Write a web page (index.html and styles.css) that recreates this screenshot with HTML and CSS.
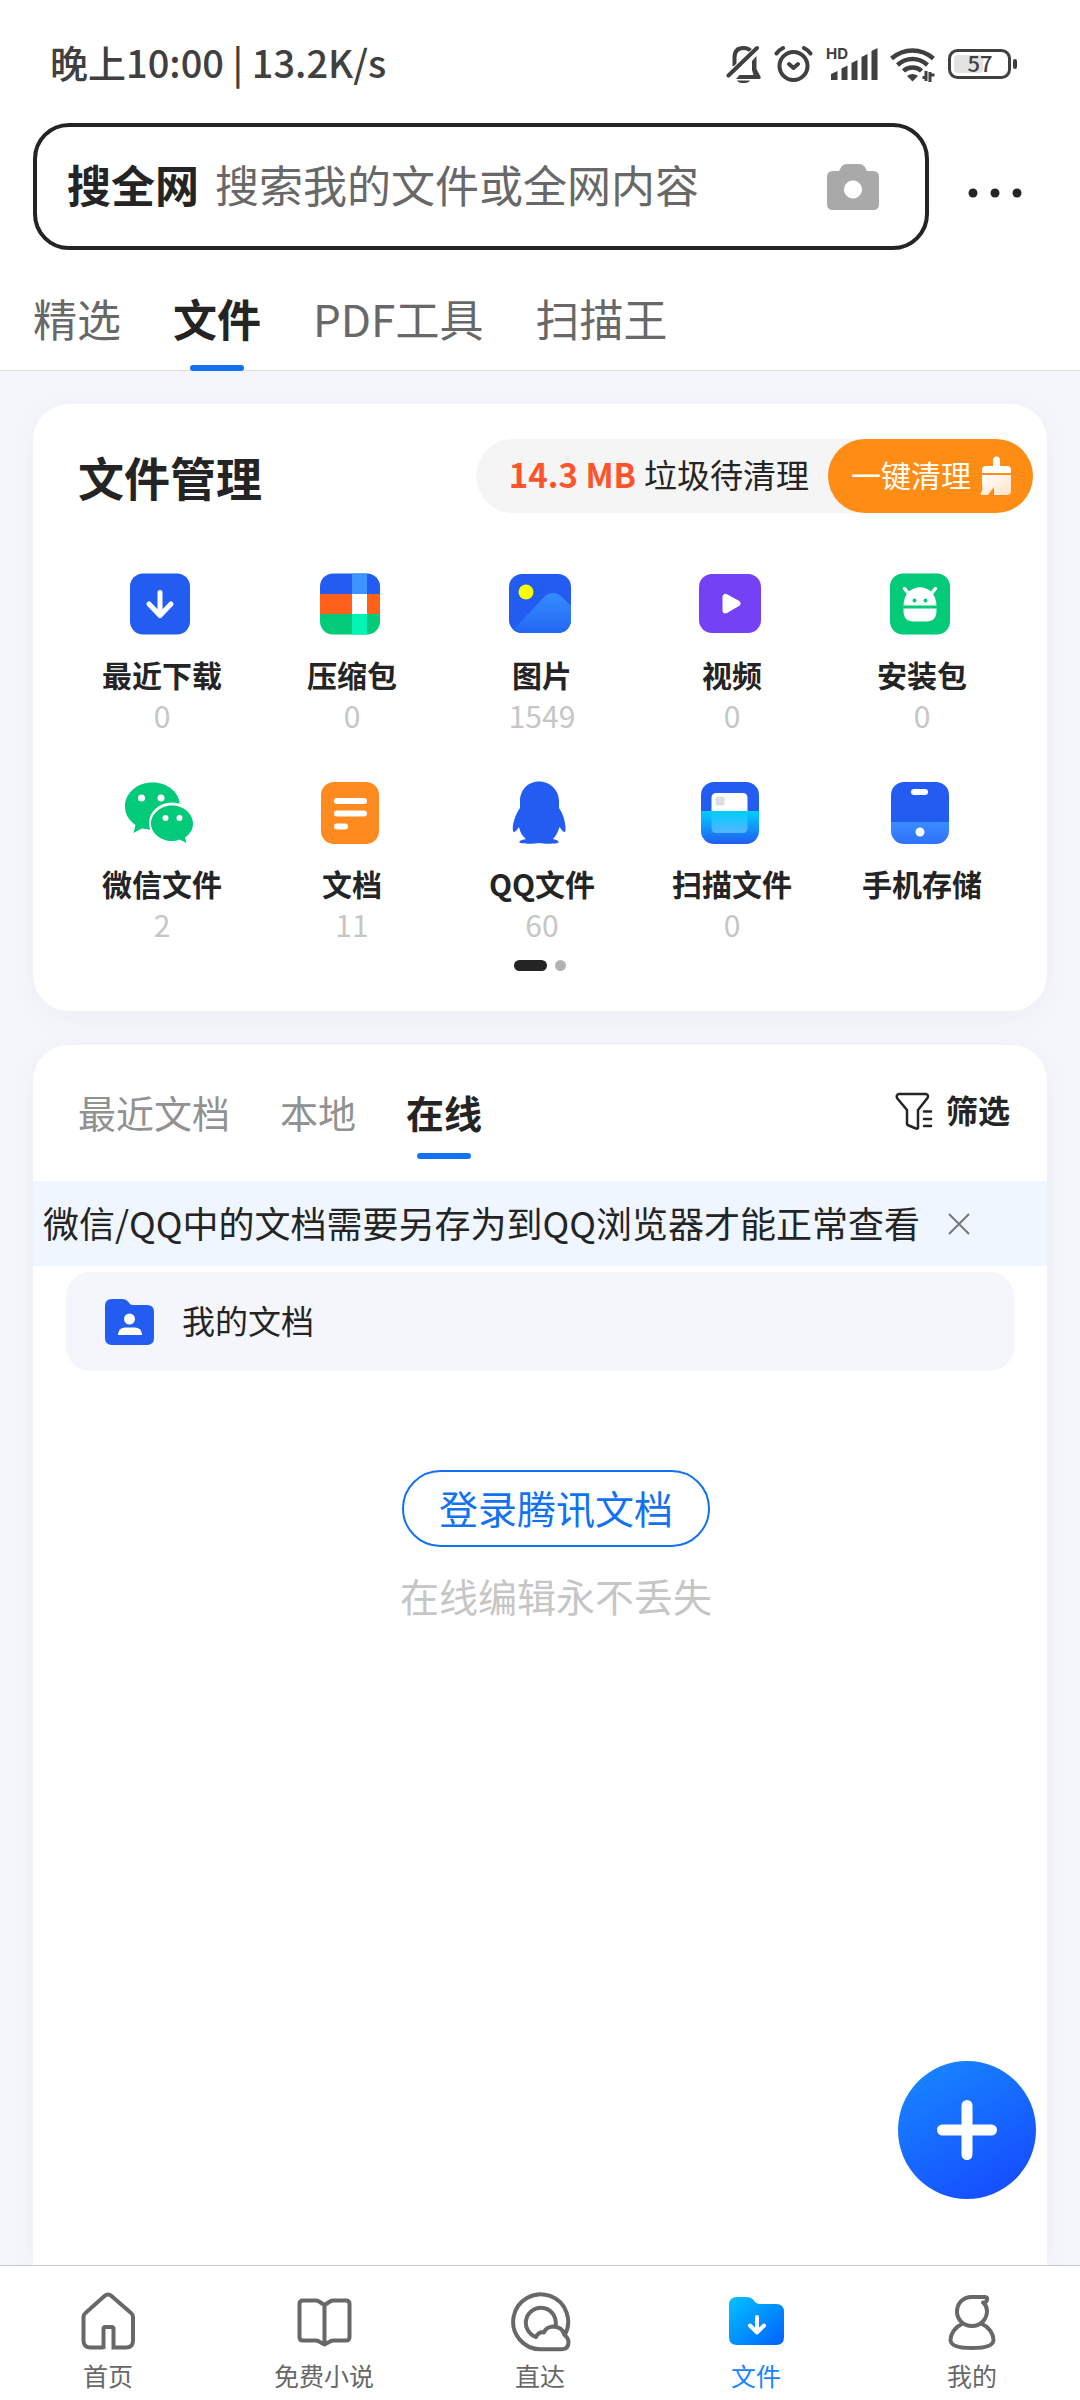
FILE: index.html
```html
<!DOCTYPE html>
<html lang="zh-CN">
<head>
<meta charset="utf-8">
<meta name="viewport" content="width=device-width, initial-scale=1">
<title>文件</title>
<link rel="stylesheet" href="styles.css">
</head>
<body>
<header class="header">
  <div class="status">
    <span class="status-text">晚上10:00 | 13.2K/s</span>
    <div class="status-icons">
      <svg width="36" height="38" viewBox="0 0 36 38" fill="none" stroke="#404040" stroke-width="4" stroke-linecap="round">
        <path d="M8.500 21V12.500C8.500 6 12 3 17.500 3c4 0 6.500 1.500 8 4" stroke-linecap="butt"/>
        <path d="M26 16l4.500-5v13l4 7.500c.5 1.500 0 2.500-1 2.500H10l3.500-4h14l-1.500-5z" fill="#404040" stroke="none"/>
        <path d="M2 31.500L32 3" stroke="#fff" stroke-width="7"/>
        <path d="M2.500 30.500L31 3"/>
        <path d="M11 35.500h13c-2 3.500-11 3.500-13 0z" fill="#404040" stroke="none"/>
      </svg>
      <svg width="40" height="38" viewBox="0 0 40 38" fill="none" stroke="#404040" stroke-width="4" stroke-linecap="round" stroke-linejoin="round">
        <circle cx="19.500" cy="21" r="14"/>
        <path d="M15 19l4.500 4 4.500-4M2.500 8.500Q5 5 9 3M30 3q4 2 6.500 5.500"/>
      </svg>
      <svg width="52" height="38" viewBox="-2 0 52 38" fill="#404040">
        <text x="-2" y="14" class="hd">HD</text>
        <path d="M3 29l6.500-3v9H3zM13.500 23.500l6-3V35h-6zM23.500 18l6-3v20h-6zM33.500 12l6-3v26h-6zM43.500 6l6-3v32h-6z"/>
      </svg>
      <svg width="46" height="38" viewBox="0 0 46 38" fill="none" stroke="#404040" stroke-width="4.500">
        <path d="M1.500 13.500Q11 5.500 22.500 5.500T43.500 13.500M7.500 20Q14 14 22.500 14T37.500 20M13.500 26Q17 22.500 22.500 22.500T31.500 26"/>
        <path d="M17 31q5.500-4 11 0l-5.500 5.500z" fill="#404040" stroke="none"/>
        <path d="M36 26v10M34.500 32.500l-2 0M40 37V27M41.500 30h3" stroke-width="3"/>
      </svg>
      <svg width="70" height="38" viewBox="0 0 70 38" fill="none">
        <rect x="1.500" y="5.500" width="60" height="27" rx="8" stroke="#404040" stroke-width="3"/>
        <rect x="6" y="10" width="29" height="18" rx="4" fill="#e3e3e3"/>
        <rect x="65" y="14" width="4" height="10" rx="2" fill="#404040"/>
        <text x="32" y="27" text-anchor="middle" class="battery">57</text>
      </svg>
    </div>
  </div>
  <div class="search-row">
    <form class="search">
      <button type="button" class="search-scope">搜全网</button>
      <input class="search-input" type="text" aria-label="搜索" placeholder="搜索我的文件或全网内容">
      <button type="button" class="icon-button" aria-label="拍照搜索">
        <svg width="52" height="48" viewBox="0 0 52 48"><path fill="#a9a9a9" fill-rule="evenodd" d="M12 8l2.500-4.500Q16.500 1 19 1H33q3 0 4.500 2.500L40 8h6q6 0 6 6V41q0 6-6 6H6q-6 0-6-6V14Q0 8 6 8zM26 17.500a9 9 0 1 0 .01 0z"/></svg>
      </button>
    </form>
    <button type="button" class="icon-button more" aria-label="更多">
      <svg width="54" height="10" viewBox="0 0 54 10" fill="#242424"><circle cx="5" cy="5" r="4.500"/><circle cx="27" cy="5" r="4.500"/><circle cx="49" cy="5" r="4.500"/></svg>
    </button>
  </div>
  <nav class="tabs">
    <a href="#" class="tab">精选</a>
    <a href="#" class="tab active">文件</a>
    <a href="#" class="tab">PDF工具</a>
    <a href="#" class="tab">扫描王</a>
  </nav>
</header>

<main class="content">
  <section class="card manager">
    <div class="manager-head">
      <h1 class="title">文件管理</h1>
      <div class="clean">
        <span class="clean-info"><strong class="size">14.3 MB</strong>垃圾待清理</span>
        <button type="button" class="clean-button"><span class="clean-label">一键清理</span>
          <svg width="32" height="40" viewBox="0 0 32 40">
            <defs><linearGradient id="brush" x1="0" y1="0" x2="1" y2="1"><stop offset="0" stop-color="#fff"/><stop offset="1" stop-color="#ffe3c8"/></linearGradient></defs>
            <path fill="#fff" d="M13 10V4a3.500 3.500 0 0 1 7 0v6h7q4 0 4 4v3H2v-3q0-4 4-4z"/>
            <path fill="url(#brush)" d="M2 19H31V35q0 4-4 4H14V31l-6 8H1q-1-1 0-2 2-3 1-9z"/>
          </svg>
        </button>
      </div>
    </div>
    <ul class="grid">
      <li><a href="#" class="item">
        <svg width="72" height="64" viewBox="0 0 72 64"><rect x="6" y="1.500" width="60" height="61" rx="13" fill="#225cf0"/><path d="M36 20.500v23M25 32l11 11.500 11-11.500" fill="none" stroke="#fff" stroke-width="5" stroke-linecap="round" stroke-linejoin="round"/></svg>
        <span class="label">最近下载</span><span class="count">0</span></a></li>
      <li><a href="#" class="item">
        <svg width="72" height="64" viewBox="0 0 72 64"><defs><clipPath id="zip"><rect x="6" y="1.500" width="60" height="61" rx="13"/></clipPath></defs>
          <g clip-path="url(#zip)"><path fill="#225cf0" d="M6 0h60v22H6z"/><path fill="#ff611b" d="M6 22h60v20H6z"/><path fill="#03ca78" d="M6 42h60v22H6z"/><path fill="#3d93ff" d="M38 0h15v22H38z"/><path fill="#fff" d="M38 22h15v20H38z"/><path fill="#03f5b6" d="M38 42h15v22H38z"/></g></svg>
        <span class="label">压缩包</span><span class="count">0</span></a></li>
      <li><a href="#" class="item">
        <svg width="72" height="64" viewBox="0 0 72 64"><defs><clipPath id="pic"><rect x="5" y="2" width="62" height="59" rx="13"/></clipPath><linearGradient id="hill" x1="0" y1="0" x2="0" y2="1"><stop offset="0" stop-color="#358cff"/><stop offset="1" stop-color="#2467f3"/></linearGradient></defs>
          <g clip-path="url(#pic)"><path fill="#225cf0" d="M5 2h62v59H5z"/><circle cx="22" cy="20" r="7.500" fill="#fbff00"/><path fill="url(#hill)" d="M9 58L40 25q9-8 18 0l9 9v27H9z"/></g></svg>
        <span class="label">图片</span><span class="count">1549</span></a></li>
      <li><a href="#" class="item">
        <svg width="72" height="64" viewBox="0 0 72 64"><rect x="5" y="2" width="62" height="59" rx="13" fill="#7541f5"/><path d="M31.500 25v13.500l12-7z" fill="#fff" stroke="#fff" stroke-width="6" stroke-linejoin="round"/></svg>
        <span class="label">视频</span><span class="count">0</span></a></li>
      <li><a href="#" class="item">
        <svg width="72" height="64" viewBox="0 0 72 64"><rect x="6" y="1.500" width="60" height="61" rx="13" fill="#03ca78"/><path d="M19.500 33.500C20 9 52 9 52.500 33.500zM19.500 36.500h33v2q0 11-10 11h-13q-10 0-10-11z" fill="#fff"/><path d="M20.500 16.500l4 5M51.500 16.500l-4 5" stroke="#fff" stroke-width="3.500" stroke-linecap="round"/><circle cx="30.500" cy="28.500" r="2" fill="#03ca78"/><circle cx="41.500" cy="28.500" r="2" fill="#03ca78"/></svg>
        <span class="label">安装包</span><span class="count">0</span></a></li>
      <li><a href="#" class="item">
        <svg width="72" height="64" viewBox="0 0 72 64"><path fill="#03ca78" d="M28.500 1.500C13 1.500 1 12 1 25.500c0 8 4 14 10.500 18.500L9.500 52l8.500-4.500q7 1.500 11.500 1C43 49 56 38 56 25 56 12 44 1.500 28.500 1.500z"/><ellipse cx="48" cy="42" rx="23" ry="20.500" fill="#fff"/><path fill="#03ca78" d="M48 24.500c11.500 0 21 8 21 18 0 6-3 10.500-8 14l1.500 5.500-7-3.500q-3 1.500-7.500 1.500c-11.500 0-21-8-21-17.500s9.500-18 21-18z"/><g fill="#fff"><circle cx="17.500" cy="17" r="3.500"/><circle cx="37" cy="17" r="3.500"/><circle cx="41.500" cy="37" r="3"/><circle cx="55.500" cy="37" r="3"/></g></svg>
        <span class="label">微信文件</span><span class="count">2</span></a></li>
      <li><a href="#" class="item">
        <svg width="72" height="64" viewBox="0 0 72 64"><rect x="7" y="1" width="58" height="62" rx="13" fill="#ff8a1f"/><path d="M23 20h27M23 32.500h27M23 45.500h8" stroke="#fff" stroke-width="6" stroke-linecap="round"/></svg>
        <span class="label">文档</span><span class="count">11</span></a></li>
      <li><a href="#" class="item">
        <svg width="72" height="64" viewBox="0 0 72 64"><path fill="#225cf0" d="M35 .5C23 .5 16 10 16 20V27C11 34 8 44 9 50c1 3 4-1 6-4 1 5 3 9 7 12-5 1-7 2-6.500 3.500C17 63 30 63 35 62c5 1 18 1 19.500-.5C55 60 53 59 49 58c3-3 5-7 6.500-12 2.500 3 4.500 7 6 4C62 44 60 34 55 27V20C55 10 47 .5 35 .5z"/></svg>
        <span class="label">QQ文件</span><span class="count">60</span></a></li>
      <li><a href="#" class="item">
        <svg width="72" height="64" viewBox="0 0 72 64"><defs><clipPath id="scan"><rect x="7" y="1" width="58" height="62" rx="13"/></clipPath><linearGradient id="beam" x1="0" y1="0" x2="0" y2="1"><stop offset="0" stop-color="#00cfff"/><stop offset="1" stop-color="#225cf0"/></linearGradient><linearGradient id="page" x1="0" y1="0" x2="0" y2="1"><stop offset="0" stop-color="#00cfff"/><stop offset="1" stop-color="#55b4ff"/></linearGradient></defs>
          <g clip-path="url(#scan)"><path fill="#225cf0" d="M7 1h58v30H7z"/><path fill="url(#beam)" d="M7 30h58v33H7z"/><path fill="#fff" d="M17.500 30V17q0-5 5-5h26q5 0 5 5v13z"/><path fill="url(#page)" d="M17.500 30h36v17q0 5-5 5h-26q-5 0-5-5z"/><rect x="21.500" y="15.500" width="9" height="9" rx="2" fill="#dedede"/></g></svg>
        <span class="label">扫描文件</span><span class="count">0</span></a></li>
      <li><a href="#" class="item">
        <svg width="72" height="64" viewBox="0 0 72 64"><defs><clipPath id="phone"><rect x="7" y="1" width="58" height="62" rx="13"/></clipPath><linearGradient id="dock" x1="0" y1="0" x2="0" y2="1"><stop offset="0" stop-color="#3b8dff"/><stop offset="1" stop-color="#2e71fa"/></linearGradient></defs>
          <g clip-path="url(#phone)"><path fill="#225cf0" d="M7 1h58v41H7z"/><path fill="url(#dock)" d="M7 41h58v22H7z"/></g><rect x="27" y="8" width="17" height="6" rx="3" fill="#fff"/><circle cx="36" cy="51" r="4.500" fill="#fff"/></svg>
        <span class="label">手机存储</span></a></li>
    </ul>
    <div class="pager"><span class="page current"></span><span class="page"></span></div>
  </section>

  <section class="card docs">
    <div class="docs-head">
      <div class="doc-tabs">
        <a href="#" class="doc-tab">最近文档</a>
        <a href="#" class="doc-tab">本地</a>
        <a href="#" class="doc-tab active">在线</a>
      </div>
      <button type="button" class="filter">
        <svg width="38" height="38" viewBox="0 0 38 38" fill="none" stroke="#242424" stroke-width="2.500" stroke-linecap="round" stroke-linejoin="round"><path d="M4 2H31q3 1 1.500 4L23 18V36q-1 1-2 .5L12.500 33 12 32V18L2 6Q1 2.500 4 2zM29 19.500h7M29 27h7M29 34h7"/></svg>
        <span>筛选</span></button>
    </div>
    <div class="notice">
      <span class="notice-text">微信/QQ中的文档需要另存为到QQ浏览器才能正常查看</span>
      <button type="button" class="icon-button" aria-label="关闭">
        <svg width="22" height="22" viewBox="0 0 22 22" fill="none" stroke="#777" stroke-width="2"><path d="M1 1l20 20M21 1L1 21"/></svg>
      </button>
    </div>
    <a href="#" class="folder">
      <svg width="50" height="48" viewBox="0 0 50 48"><path fill="#225cf0" d="M7 1H18q3 0 5 2.500l2 2.500q1 1 3 1h14q7 0 7 7V40q0 7-7 7H7q-7 0-7-7V8Q0 1 7 1z"/><circle cx="24.500" cy="21" r="5.500" fill="#fff"/><path fill="#fff" d="M13 37v-1q1-6.500 7-6.500h10q6 0 7 6.500v1z"/></svg>
      <span class="folder-name">我的文档</span></a>
    <div class="login">
      <button type="button" class="login-button">登录腾讯文档</button>
      <p class="hint">在线编辑永不丢失</p>
    </div>
  </section>
</main>

<nav class="bottom">
  <button type="button" class="fab" aria-label="新建">
    <svg width="60" height="60" viewBox="0 0 60 60" stroke="#fff" stroke-width="11" stroke-linecap="round"><path d="M30 5.500v49M5.500 30h49"/></svg>
  </button>
  <a href="#" class="bottom-item">
    <svg width="64" height="64" viewBox="0 0 64 64" fill="none" stroke="#686868" stroke-width="4"><path d="M27.500 61V41q0-2 2-2h6q2 0 2 2V59.500H50q7 0 7-7V29q0-2.500-2-4L35.500 8q-3.500-3-7 0L9.500 25q-2 1.500-2 4V52.500q0 7 7 7H27.500"/></svg>
    首页</a>
  <a href="#" class="bottom-item">
    <svg width="64" height="64" viewBox="0 0 64 64" fill="none" stroke="#686868" stroke-width="4" stroke-linejoin="round"><path d="M32.500 17L27 13.500Q25.500 12.500 23.500 12.500H11q-3.500 0-3.500 3.500V49q0 3.500 3.500 3.500H23.500q2 0 3.500 1l5.500 3 5.500-3q1.500-1 3.500-1H54q3.500 0 3.500-3.500V16q0-3.500-3.500-3.500H41.500q-2 0-3.500 1zV56"/></svg>
    免费小说</a>
  <a href="#" class="bottom-item">
    <svg width="64" height="64" viewBox="0 0 64 64" fill="none" stroke="#686868" stroke-width="4" stroke-linejoin="round"><path d="M56.500 47.500A27.500 27.500 0 1 0 32.500 61.300H54Q60.500 61 60.500 54q0-4-4-7-2-8.500-12-8.500-7 1-8.500 6-5-1.500-8 4.500A15 15 0 1 1 47.500 38"/></svg>
    直达</a>
  <a href="#" class="bottom-item active">
    <svg width="64" height="64" viewBox="0 0 64 64"><defs><linearGradient id="files" x1="0" y1="0" x2="1" y2="1"><stop offset="0" stop-color="#05c3ff"/><stop offset="1" stop-color="#0060ff"/></linearGradient></defs><path fill="url(#files)" d="M13 9H23q4 0 6 2.500l2 2.500q2 2 5 2H52q8 0 8 8V49q0 8-8 8H13q-8 0-8-8V17Q5 9 13 9z"/><path d="M33 29v15M26 37.500l7 7 7-7" fill="none" stroke="#fff" stroke-width="4" stroke-linecap="round" stroke-linejoin="round"/></svg>
    文件</a>
  <a href="#" class="bottom-item">
    <svg width="64" height="64" viewBox="0 0 64 64" fill="none" stroke="#686868" stroke-width="4" stroke-linecap="round" stroke-linejoin="round"><path d="M43 14.500Q46 15 47 12T45 9H32C22 9 17 16 17 24c0 7 6 14 15 14s15-7 15-15q0-5-3.500-8M22 36C15 39 10.500 46 10.500 52q0 8 21.500 8t21.500-8C53.500 46 49 39 42 36"/></svg>
    我的</a>
</nav>
</body>
</html>
```
FILE: styles.css
```css
* {
  box-sizing: border-box;
}

body {
  margin: 0;
  min-height: 100vh;
  display: flex;
  flex-direction: column;
  background: #f4f6fb;
  color: #242424;
  font-family: "Noto Sans CJK SC", sans-serif;
}

svg {
  display: block;
  flex: none;
}

a {
  color: inherit;
  text-decoration: none;
}

button,
input {
  margin: 0;
  padding: 0;
  border: 0;
  background: none;
  color: inherit;
  font: inherit;
}

.icon-button {
  display: flex;
}

/* Header */
.header {
  background: #fff;
  border-bottom: 1px solid #e0e0e3;
}

.status {
  display: flex;
  justify-content: space-between;
  height: 48px;
  margin: 40px 62px 35px 50px;
}

.status-text {
  margin-top: -2px;
  color: #404040;
  font-size: 38px;
  font-weight: 500;
  line-height: 48px;
}

.status-icons {
  display: flex;
  align-items: center;
  gap: 12px;
}

.hd {
  font: 700 15px "Inter", sans-serif;
}

.battery {
  fill: #404040;
  font: 500 22px "Noto Sans CJK SC", sans-serif;
}

.search-row {
  display: flex;
  align-items: center;
  gap: 39px;
  padding: 0 58px 0 33px;
}

.search {
  flex: 1;
  display: flex;
  align-items: center;
  height: 127px;
  padding: 0 46px 0 30px;
  border: 4px solid #242424;
  border-radius: 36px;
}

.search-scope,
.search-input {
  padding-bottom: 5px;
  font-size: 44px;
}

.search-scope {
  font-weight: 700;
}

.search-input {
  flex: 1;
  min-width: 0;
  margin: 0 16px;
  outline: 0;
}

.search-input::placeholder {
  color: #686868;
  opacity: 1;
}

.more {
  padding: 12px 0 0;
}

.tabs {
  display: flex;
  gap: 52px;
  padding: 0 33px;
  color: #686868;
  font-size: 44px;
  line-height: 52px;
}

.tab {
  padding: 42px 0 26px;
}

.tab.active,
.doc-tab.active {
  position: relative;
  color: #242424;
  font-weight: 700;
}

.tab.active::after,
.doc-tab.active::after {
  content: "";
  position: absolute;
  bottom: -1px;
  left: 50%;
  width: 54px;
  height: 6px;
  margin-left: -27px;
  border-radius: 3px;
  background: #1372f1;
}

/* Cards */
.content {
  flex: 1;
  display: flex;
  flex-direction: column;
  gap: 34px;
  padding: 33px 33px 0;
  overflow: hidden;
}

.card {
  background: #fff;
  border-radius: 36px;
  box-shadow: 0 6px 30px rgba(40, 50, 80, 0.04);
}

.manager {
  padding: 35px 32px 40px;
}

.manager-head {
  display: flex;
  justify-content: space-between;
  align-items: center;
  margin: 0 -18px 59px 13px;
}

.title {
  margin: 0;
  font-size: 46px;
  font-weight: 700;
  line-height: 60px;
}

.clean {
  display: flex;
  align-items: center;
  height: 74px;
  padding-left: 33px;
  border-radius: 37px;
  background: #f5f5f5;
}

.clean-info {
  margin-right: 19px;
  padding-bottom: 4px;
  font-size: 33px;
}

.size {
  margin-right: 8px;
  color: #ff532b;
  font-weight: 700;
}

.clean-button {
  display: flex;
  align-items: center;
  gap: 9px;
  height: 74px;
  padding: 0 21px 0 23px;
  border-radius: 37px;
  background: #ff8c14;
  color: #fff;
  font-size: 30px;
}

.clean-label {
  padding-bottom: 4px;
}

.grid {
  display: grid;
  grid-template-columns: repeat(5, 1fr);
  row-gap: 46px;
  margin: 0;
  padding: 0;
  list-style: none;
}

.item {
  display: flex;
  flex-direction: column;
  align-items: center;
}

.label,
.count {
  padding-left: 4px;
  font-size: 30px;
}

.label {
  margin-top: 17px;
  font-weight: 700;
  line-height: 42px;
}

.count {
  color: #c6c6c6;
  line-height: 40px;
}

.pager {
  display: flex;
  justify-content: center;
  gap: 8px;
  margin-top: 16px;
}

.page {
  width: 11px;
  height: 11px;
  border-radius: 6px;
  background: #b2b2b2;
}

.page.current {
  width: 33px;
  background: #242424;
}

/* Documents */
.docs {
  flex: 1;
  border-radius: 36px 36px 0 0;
}

.docs-head {
  display: flex;
  justify-content: space-between;
  align-items: flex-start;
  padding: 0 37px 23px 45px;
}

.doc-tabs {
  display: flex;
  gap: 50px;
  color: #919191;
  font-size: 38px;
  line-height: 46px;
}

.doc-tab {
  padding: 44px 0 23px;
}

.filter {
  display: flex;
  gap: 13px;
  margin-top: 42px;
  font-size: 32px;
  font-weight: 700;
  line-height: 44px;
}

.filter svg {
  margin-top: 5px;
}

.notice {
  display: flex;
  align-items: center;
  gap: 28px;
  height: 85px;
  padding-left: 10px;
  background: #eff6ff;
  font-size: 36px;
}

.notice-text,
.folder-name {
  padding-bottom: 4px;
}

.folder {
  display: flex;
  align-items: center;
  gap: 27px;
  height: 99px;
  margin: 6px 33px 0;
  padding-left: 39px;
  border-radius: 24px;
  background: #f4f6fb;
  font-size: 33px;
}

.login {
  display: flex;
  flex-direction: column;
  align-items: center;
  padding: 99px 0 0 32px;
  font-size: 39px;
  line-height: 60px;
}

.login-button {
  height: 77px;
  padding: 0 35px 4px;
  border: 2px solid #1372f1;
  border-radius: 39px;
  color: #1372f1;
}

.hint {
  margin: 18px 0 0;
  color: #c6c6c6;
}

/* Bottom navigation */
.bottom {
  position: relative;
  display: grid;
  grid-template-columns: repeat(5, 1fr);
  height: 135px;
  padding-top: 22px;
  border-top: 1px solid #c8c9cf;
  background: #fff;
  color: #686868;
  font-size: 25px;
  line-height: 30px;
}

.bottom-item {
  display: flex;
  flex-direction: column;
  align-items: center;
  gap: 8px;
}

.bottom-item.active {
  color: #1683fb;
}

.fab {
  position: absolute;
  right: 44px;
  bottom: 201px;
  display: flex;
  align-items: center;
  justify-content: center;
  width: 138px;
  height: 138px;
  border-radius: 50%;
  background: linear-gradient(150deg, #188aff, #1546ff);
}
```
